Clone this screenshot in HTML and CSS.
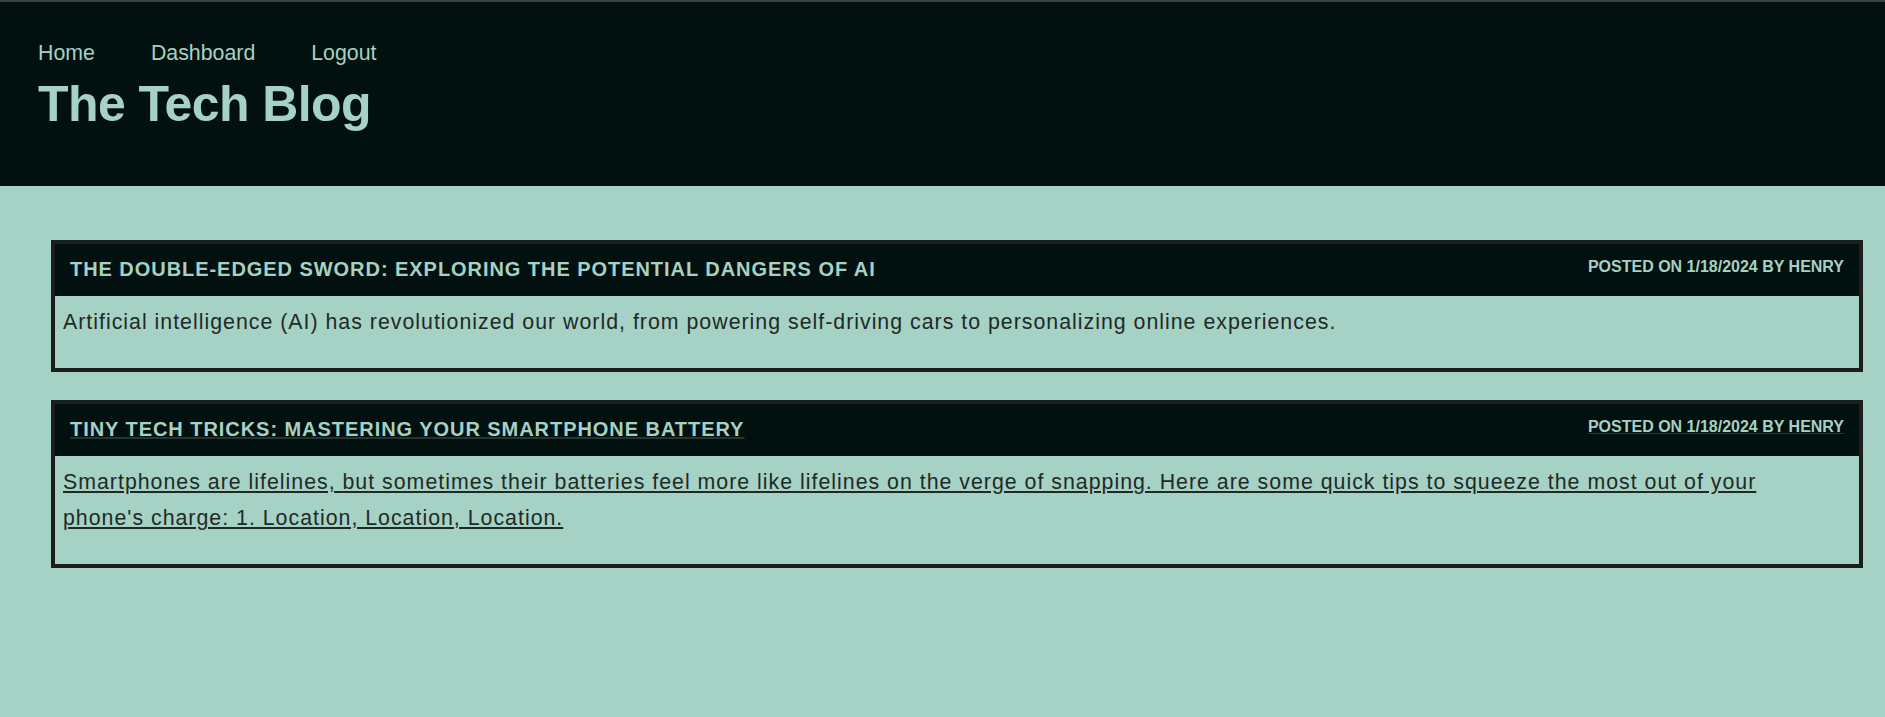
FILE: index.html
```html
<!DOCTYPE html>
<html lang="en">
<head>
<meta charset="utf-8">
<title>The Tech Blog</title>
<link rel="stylesheet" href="styles.css">
</head>
<body>
<div class="topline"></div>
<header class="site-header">
  <nav class="nav">
    <a href="#">Home</a>
    <a href="#">Dashboard</a>
    <a href="#">Logout</a>
  </nav>
  <h1 class="site-title">The Tech Blog</h1>
</header>
<main class="posts">
  <article class="post">
    <div class="post-head">
      <h2 class="post-title">The Double-Edged Sword: Exploring the Potential Dangers of AI</h2>
      <p class="post-meta">Posted on 1/18/2024 by Henry</p>
    </div>
    <div class="post-body">
      <p>Artificial intelligence (AI) has revolutionized our world, from powering self-driving cars to personalizing online experiences.</p>
    </div>
  </article>
  <a class="post post-link" href="#">
    <div class="post-head">
      <h2 class="post-title">Tiny Tech Tricks: Mastering Your Smartphone Battery</h2>
      <p class="post-meta">Posted on 1/18/2024 by Henry</p>
    </div>
    <div class="post-body">
      <p>Smartphones are lifelines, but sometimes their batteries feel more like lifelines on the verge of snapping. Here are some quick tips to squeeze the most out of your phone's charge: 1. Location, Location, Location.</p>
    </div>
  </a>
</main>
</body>
</html>
```
FILE: styles.css
```css
* { box-sizing: border-box; }
html, body {
  margin: 0;
  padding: 0;
}
body {
  background: #a6d1c5;
  font-family: "Liberation Sans", Arial, sans-serif;
  color: #1f2a26;
  min-height: 717px;
}
.topline {
  height: 2px;
  background: #3c4144;
}
.site-header {
  background: #02110f;
  height: 184px;
  padding: 39px 38px 0;
}
.nav {
  display: flex;
  gap: 56px;
}
.nav a {
  color: #a6d1c5;
  text-decoration: none;
  font-size: 21.33px;
  line-height: 24px;
}
.site-title {
  margin: 11px 0 0;
  font-size: 50px;
  line-height: 57px;
  letter-spacing: -0.6px;
  color: #a6d1c5;
  font-weight: bold;
}
.posts {
  padding: 54px 22px 40px 51px;
  display: flex;
  flex-direction: column;
  gap: 28px;
}
.post {
  display: block;
  border: 4px solid #1c1e1d;
  color: inherit;
}
.post-head {
  background: #02110f;
  display: flex;
  justify-content: space-between;
  align-items: flex-start;
  padding: 14px 15px 15px 15px;
  color: #a6d1c5;
}
.post-title {
  margin: 0;
  font-size: 20px;
  line-height: 23px;
  letter-spacing: 0.95px;
  font-weight: bold;
  text-transform: uppercase;
}
.post-meta {
  margin: 0;
  font-size: 16px;
  line-height: 18px;
  letter-spacing: 0;
  font-weight: bold;
  text-transform: uppercase;
}
.post-body {
  padding: 8px 28px 0 8px;
}
.post-body p {
  margin: 0 0 28px;
  font-size: 21.33px;
  line-height: 36px;
  letter-spacing: 1px;
}
.post-link {
  text-decoration: underline;
  text-decoration-color: #1f2a26;
}
.post-link .post-title,
.post-link .post-meta {
  text-decoration: underline;
  text-decoration-color: #26352f;
}
```
